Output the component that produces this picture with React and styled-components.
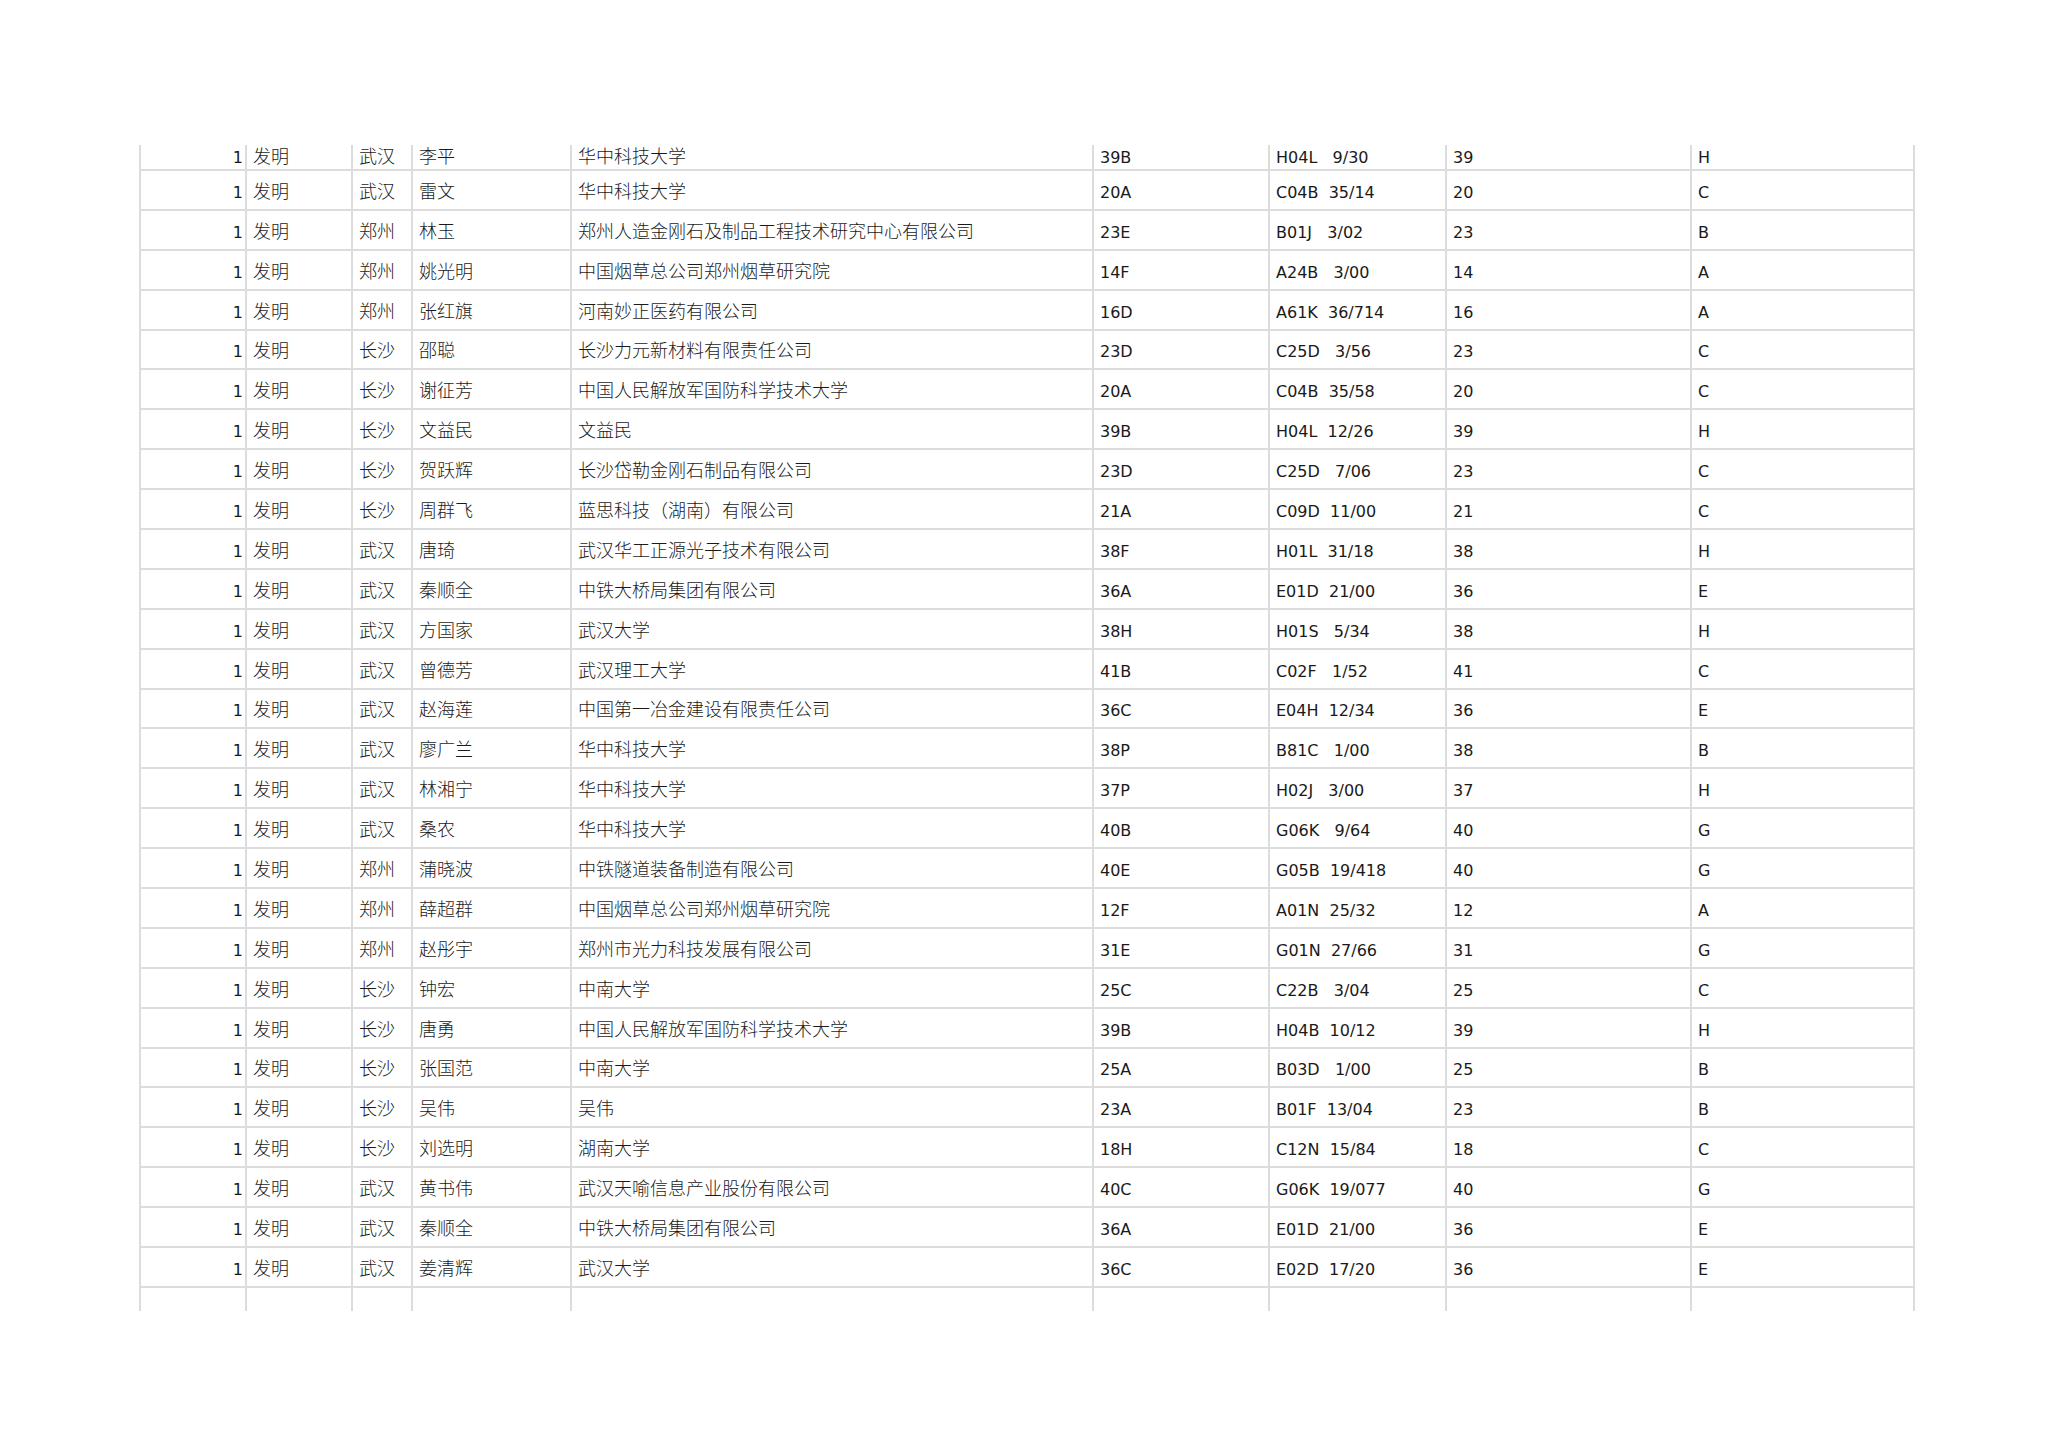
import React from "react";
import styled, { createGlobalStyle, css } from "styled-components";

const GlobalStyle = createGlobalStyle`
  html, body { margin: 0; padding: 0; background: #ffffff; }
  body { width: 2048px; min-height: 1447px; }
`;

const COLS = "106px 106px 60px 159px 522px 176px 177px 245px 223px";
const LINE = "#dcdcdc";

const Page = styled.div`
  box-sizing: border-box;
  width: 2048px;
  min-height: 1447px;
  padding: 145px 0 0 139px;
`;

const Sheet = styled.div`
  display: inline-flex;
  flex-direction: column;
  border-left: 2px solid ${LINE};
`;

const Row = styled.div`
  display: grid;
  grid-template-columns: ${COLS};
  height: ${(p) => p.$h}px;
`;

const Cell = styled.div`
  box-sizing: border-box;
  display: flex;
  align-items: flex-end;
  justify-content: ${(p) => (p.$right ? "flex-end" : "flex-start")};
  padding: 0 ${(p) => (p.$right ? "2px" : "0")} 0 ${(p) => (p.$right ? "0" : "6px")};
  border-right: 2px solid ${LINE};
  border-bottom: ${(p) => (p.$open ? "none" : `2px solid ${LINE}`)};
  color: #1a1a1a;
  white-space: pre;
  ${(p) =>
    p.$cjk
      ? css`
          font-family: "Noto Sans CJK SC", "Noto Sans", sans-serif;
          font-weight: 300;
          font-size: 18px;
          line-height: 20px;
          padding-bottom: ${p.$short ? 4 : 9}px;
        `
      : css`
          font-family: "DejaVu Sans", "Noto Sans CJK SC", sans-serif;
          font-size: 16px;
          line-height: 20px;
          padding-bottom: ${p.$short ? 1 : 6}px;
        `}
`;

const DATA = [
  ["武汉", "李平", "华中科技大学", "39B", "H04L   9/30", "39", "H"],
  ["武汉", "雷文", "华中科技大学", "20A", "C04B  35/14", "20", "C"],
  ["郑州", "林玉", "郑州人造金刚石及制品工程技术研究中心有限公司", "23E", "B01J   3/02", "23", "B"],
  ["郑州", "姚光明", "中国烟草总公司郑州烟草研究院", "14F", "A24B   3/00", "14", "A"],
  ["郑州", "张红旗", "河南妙正医药有限公司", "16D", "A61K  36/714", "16", "A"],
  ["长沙", "邵聪", "长沙力元新材料有限责任公司", "23D", "C25D   3/56", "23", "C"],
  ["长沙", "谢征芳", "中国人民解放军国防科学技术大学", "20A", "C04B  35/58", "20", "C"],
  ["长沙", "文益民", "文益民", "39B", "H04L  12/26", "39", "H"],
  ["长沙", "贺跃辉", "长沙岱勒金刚石制品有限公司", "23D", "C25D   7/06", "23", "C"],
  ["长沙", "周群飞", "蓝思科技（湖南）有限公司", "21A", "C09D  11/00", "21", "C"],
  ["武汉", "唐琦", "武汉华工正源光子技术有限公司", "38F", "H01L  31/18", "38", "H"],
  ["武汉", "秦顺全", "中铁大桥局集团有限公司", "36A", "E01D  21/00", "36", "E"],
  ["武汉", "方国家", "武汉大学", "38H", "H01S   5/34", "38", "H"],
  ["武汉", "曾德芳", "武汉理工大学", "41B", "C02F   1/52", "41", "C"],
  ["武汉", "赵海莲", "中国第一冶金建设有限责任公司", "36C", "E04H  12/34", "36", "E"],
  ["武汉", "廖广兰", "华中科技大学", "38P", "B81C   1/00", "38", "B"],
  ["武汉", "林湘宁", "华中科技大学", "37P", "H02J   3/00", "37", "H"],
  ["武汉", "桑农", "华中科技大学", "40B", "G06K   9/64", "40", "G"],
  ["郑州", "蒲晓波", "中铁隧道装备制造有限公司", "40E", "G05B  19/418", "40", "G"],
  ["郑州", "薛超群", "中国烟草总公司郑州烟草研究院", "12F", "A01N  25/32", "12", "A"],
  ["郑州", "赵彤宇", "郑州市光力科技发展有限公司", "31E", "G01N  27/66", "31", "G"],
  ["长沙", "钟宏", "中南大学", "25C", "C22B   3/04", "25", "C"],
  ["长沙", "唐勇", "中国人民解放军国防科学技术大学", "39B", "H04B  10/12", "39", "H"],
  ["长沙", "张国范", "中南大学", "25A", "B03D   1/00", "25", "B"],
  ["长沙", "吴伟", "吴伟", "23A", "B01F  13/04", "23", "B"],
  ["长沙", "刘选明", "湖南大学", "18H", "C12N  15/84", "18", "C"],
  ["武汉", "黄书伟", "武汉天喻信息产业股份有限公司", "40C", "G06K  19/077", "40", "G"],
  ["武汉", "秦顺全", "中铁大桥局集团有限公司", "36A", "E01D  21/00", "36", "E"],
  ["武汉", "姜清辉", "武汉大学", "36C", "E02D  17/20", "36", "E"],
];

function DataRow({ item, short }) {
  const [city, name, org, cls, ipc, num, sec] = item;
  return (
    <Row $h={short ? 26 : 39.9}>
      <Cell $right $short={short}>1</Cell>
      <Cell $cjk $short={short}>发明</Cell>
      <Cell $cjk $short={short}>{city}</Cell>
      <Cell $cjk $short={short}>{name}</Cell>
      <Cell $cjk $short={short}>{org}</Cell>
      <Cell $short={short}>{cls}</Cell>
      <Cell $short={short}>{ipc}</Cell>
      <Cell $short={short}>{num}</Cell>
      <Cell $short={short}>{sec}</Cell>
    </Row>
  );
}

function BlankRow() {
  return (
    <Row $h={23}>
      {Array.from({ length: 9 }).map((_, i) => (
        <Cell key={i} $open />
      ))}
    </Row>
  );
}

export default function App() {
  return (
    <>
      <GlobalStyle />
      <Page>
        <Sheet>
          {DATA.map((item, i) => (
            <DataRow key={i} item={item} short={i === 0} />
          ))}
          <BlankRow />
        </Sheet>
      </Page>
    </>
  );
}
